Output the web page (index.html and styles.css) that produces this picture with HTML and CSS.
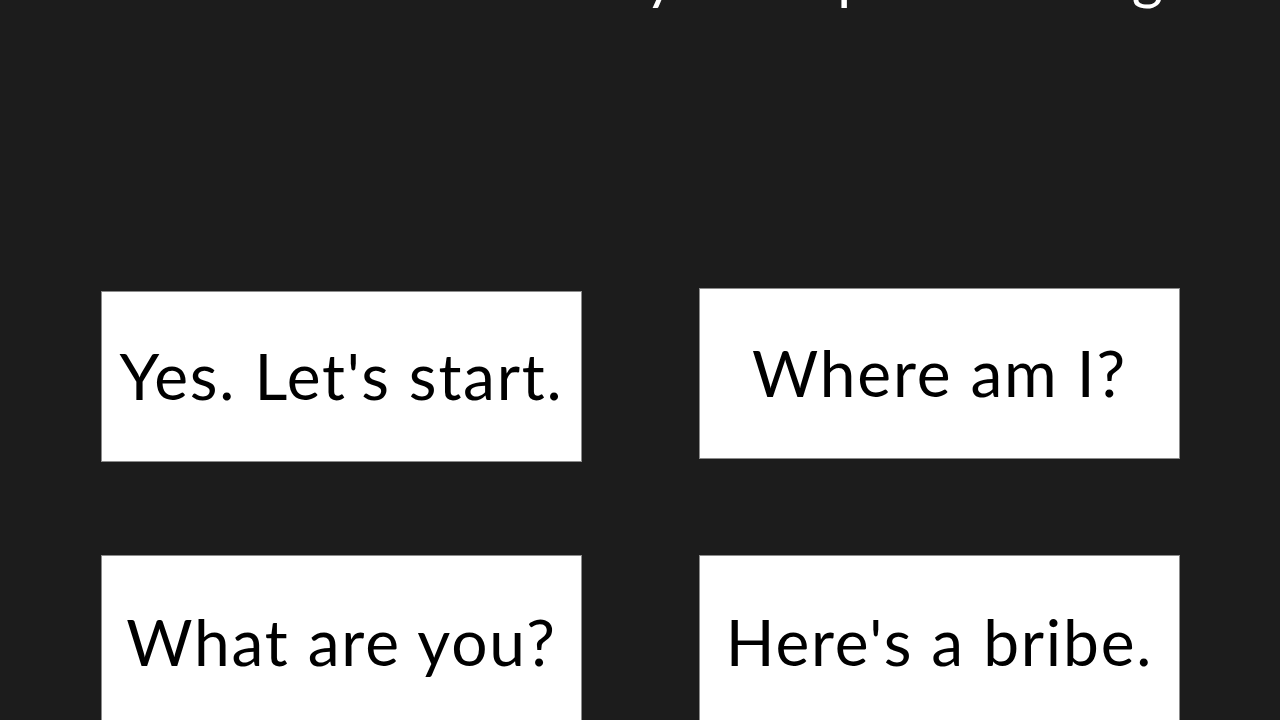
FILE: index.html
```html
<!DOCTYPE html>
<html lang="en">
<head>
<meta charset="utf-8">
<title>Choices</title>
<link rel="stylesheet" href="styles.css">
</head>
<body>
<main class="screen">
  <h1 class="prompt">Can you help me finding it</h1>
  <div class="choices">
    <button class="choice choice-a">Yes. Let's start.</button>
    <button class="choice choice-b">Where am I?</button>
    <button class="choice">What are you?</button>
    <button class="choice">Here's a bribe.</button>
  </div>
</main>
</body>
</html>
```
FILE: styles.css
```css
html, body {
  margin: 0;
  padding: 0;
  background: #1c1c1c;
  height: 720px;
  overflow: hidden;
}
.screen {
  font-family: Lato, "Noto Sans", sans-serif;
  display: flex;
  flex-direction: column;
}
.prompt {
  margin: -60px 0 0 0;
  height: 70px;
  line-height: 70px;
  font-size: 60px;
  font-weight: 400;
  color: #ffffff;
  text-align: center;
  padding-left: 462px;
  white-space: nowrap;
}
.choices {
  display: grid;
  grid-template-columns: 481px 481px;
  grid-template-rows: 174px 174px;
  column-gap: 117px;
  row-gap: 93px;
  padding-left: 101px;
  margin-top: 278px;
}
.choice {
  margin: 0;
  background: #ffffff;
  border: 1px solid #8c8c8c;
  color: #000000;
  font-family: inherit;
  font-size: 64px;
  font-weight: 400;
  letter-spacing: 1.8px;
  padding: 0 0 2px 0;
  display: flex;
  align-items: center;
  justify-content: center;
  white-space: nowrap;
}
.choice-a {
  margin-top: 3px;
}
.choice-b {
  margin-bottom: 3px;
}
```
